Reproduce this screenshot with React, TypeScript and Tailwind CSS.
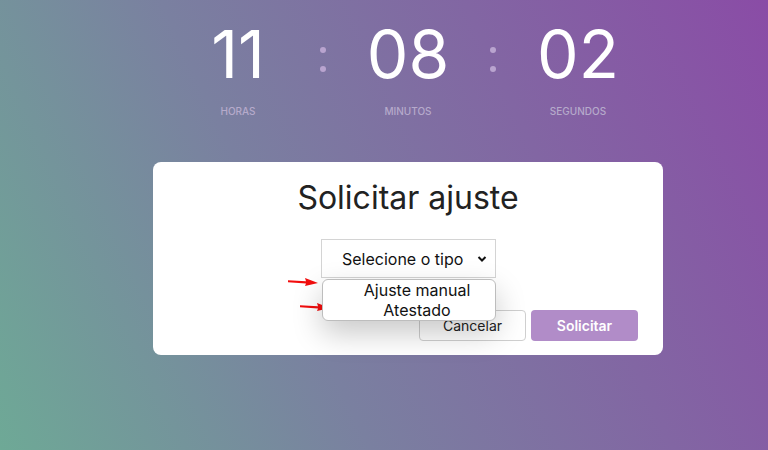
function RedArrow({ className }: { className: string }) {
  return (
    <svg className={className} width="30" height="10" viewBox="0 0 30 10">
      <path d="M0 3.2 L18 4.2 L17 1 L30 6 L17 9 L18 6.4 L0 5.2 Z" fill="#f20d0d" />
    </svg>
  );
}

function App() {
  const timer = [
    { value: "11", label: "HORAS" },
    { value: "08", label: "MINUTOS" },
    { value: "02", label: "SEGUNDOS" },
  ];
  return (
    <div
      className="relative w-[768px] h-[450px] overflow-hidden bg-[linear-gradient(65deg,#6ea996_0%,#7a80a0_38%,#8a4ca6_100%)]"
      style={{ fontFamily: "Inter, 'Noto Sans', sans-serif" }}
    >
      <div className="flex pl-[188px] pt-[16px]">
        {timer.map((item, i) => (
          <div key={item.label} className="flex">
            {i > 0 && (
              <div className="w-[70px] flex flex-col items-center pt-[31px] gap-[13px]">
                <span className="block w-[6px] h-[6px] rounded-full bg-[#b9a4cf]" />
                <span className="block w-[6px] h-[6px] rounded-full bg-[#b9a4cf]" />
              </div>
            )}
            <div className="w-[100px] flex flex-col items-center">
              <span className="text-[66px] leading-[76px] text-white tracking-[0px]">{item.value}</span>
              <span className="mt-[12px] text-[10px] font-medium text-[#b6aacb]">{item.label}</span>
            </div>
          </div>
        ))}
      </div>

      <div className="ml-[153px] mt-[43px] w-[510px] h-[193px] bg-white rounded-[8px] flex flex-col items-center pt-[14px]">
        <h1 className="text-[32px] leading-[44px] text-[#222] tracking-[0px]">Solicitar ajuste</h1>
        <div className="relative mt-[19px] ml-[1px]">
          <div className="w-[175px] h-[39px] border border-[#d4d4d4] flex items-center pl-[20px] pr-[8px] text-[16px] text-[#111]">
            <span className="flex-1">Selecione o tipo</span>
            <svg width="10" height="8" viewBox="0 0 10 8">
              <path d="M1.5 2 L5 5.5 L8.5 2" stroke="#111" strokeWidth="2" fill="none" />
            </svg>
          </div>
          <div className="absolute left-[1px] top-[40px] z-10 w-[174px] h-[42px] bg-white border border-[#bdbdbd] rounded-[6px] shadow-[0_12px_30px_rgba(0,0,0,0.22)] flex flex-col items-center pl-[16px] pt-[0px] text-[16px] leading-[20px] text-[#111]">
            <span>Ajuste manual</span>
            <span>Atestado</span>
          </div>
          <RedArrow className="absolute left-[-33px] top-[38px]" />
          <RedArrow className="absolute left-[-21px] top-[63px]" />
        </div>
        <div className="flex gap-[5px] self-end mr-[25px] mt-[32px]">
          <button className="w-[107px] h-[31px] border border-[#cfcfcf] rounded-[4px] text-[14px] text-[#222] bg-white">
            Cancelar
          </button>
          <button className="w-[107px] h-[31px] rounded-[4px] text-[14px] font-semibold text-white bg-[#b18cc8]">
            Solicitar
          </button>
        </div>
      </div>
    </div>
  );
}

export default App;
